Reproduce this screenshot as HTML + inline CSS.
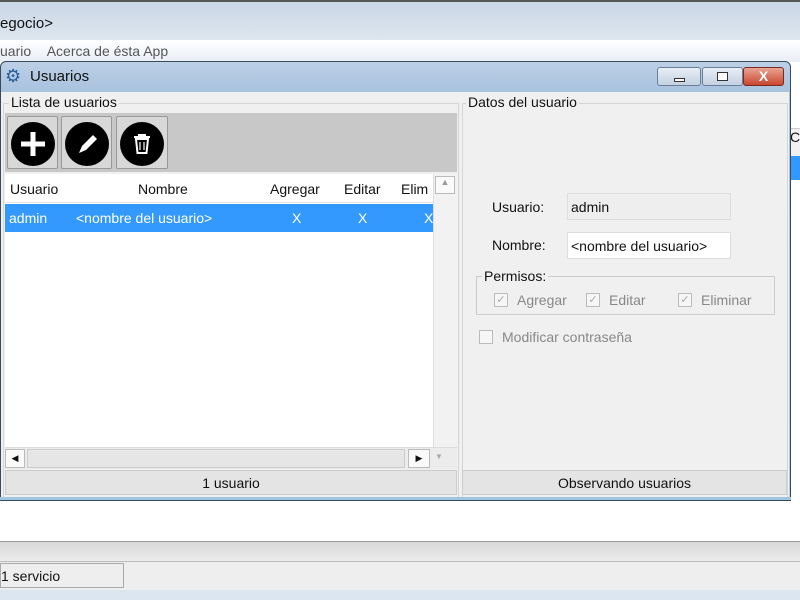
<!DOCTYPE html><html><head><style>
*{box-sizing:border-box}body{margin:0;width:800px;height:600px;overflow:hidden;background:#fff;font-family:"Liberation Sans",sans-serif;font-size:14px;color:#111;position:relative}
.a{position:absolute}
.cb{position:absolute;width:14px;height:14px;border:1px solid #bbb;background:#f6f6f6;font-size:11px;color:#aaa;text-align:center;line-height:12px}
.dis{color:#888}
</style></head><body>
<div class="a" style="left:0;top:0;width:800px;height:40px;background:linear-gradient(#c9d6e4,#dde6ef);border-top:2px solid #555"></div>
<div class="a" style="left:0;top:15px;font-size:15px">egocio&gt;</div>
<div class="a" style="left:0;top:40px;width:800px;height:22px;background:linear-gradient(#fff,#e9eef5)"></div>
<div class="a" style="left:0;top:43px;color:#555">uario&nbsp;&nbsp;&nbsp;&nbsp;Acerca de ésta App</div>
<div class="a" style="left:790px;top:128px;width:10px;height:28px;background:#f0f0f0;border-top:1px solid #ccc;font-size:14px">C</div>
<div class="a" style="left:790px;top:156px;width:10px;height:24px;background:#3399ff"></div>
<!-- dialog -->
<div class="a" style="left:0;top:61px;width:791px;height:440px;background:linear-gradient(#bcd0e6,#a9c2de 30px,#b5cbe3);border:1px solid #3a4a5a;border-radius:6px 6px 0 0"></div>
<div class="a" style="left:5px;top:66px;width:20px;height:20px;color:#2b5d9a;font-size:18px;line-height:20px">⚙</div>
<div class="a" style="left:30px;top:68px;font-size:15px">Usuarios</div>
<div class="a" style="left:657px;top:67px;width:44px;height:19px;border:1px solid #6b7f96;border-radius:3px;background:linear-gradient(#e8eef6,#c3d1e2)"><div class="a" style="left:16px;top:10px;width:11px;height:4px;border:1px solid #333;background:#fff"></div></div>
<div class="a" style="left:702px;top:67px;width:41px;height:19px;border:1px solid #6b7f96;border-radius:3px;background:linear-gradient(#e8eef6,#c3d1e2)"><div class="a" style="left:14px;top:4px;width:11px;height:9px;border:1px solid #333;background:#fff"></div></div>
<div class="a" style="left:743px;top:67px;width:41px;height:19px;border:1px solid #7a2a20;border-radius:3px;background:linear-gradient(#e9a593,#c9462f);color:#fff;font-weight:bold;text-align:center;line-height:17px;font-size:14px">X</div>
<div class="a" style="left:1px;top:92px;width:788px;height:405px;background:#f0f0f0"></div>
<!-- left group -->
<div class="a" style="left:3px;top:103px;width:456px;height:395px;border:1px solid #d5d5d5"></div>
<div class="a" style="left:9px;top:94px;background:#f0f0f0;padding:0 2px">Lista de usuarios</div>
<div class="a" style="left:5px;top:113px;width:452px;height:59px;background:#c8c8c8"></div>
<div class="a" style="left:7px;top:116px;width:51px;height:53px;border:1px solid #999;background:#d8d8d8;border-radius:2px"><svg width="49" height="51"><circle cx="25" cy="27" r="22" fill="#000"/><path d="M25 15v24M13 27h24" stroke="#fff" stroke-width="5"/></svg></div>
<div class="a" style="left:61px;top:116px;width:51px;height:53px;border:1px solid #999;background:#d8d8d8;border-radius:2px"><svg width="49" height="51"><circle cx="25" cy="27" r="22" fill="#000"/><path d="M17 36l3-7 11-11 4 4-11 11z" fill="#fff"/></svg></div>
<div class="a" style="left:116px;top:116px;width:52px;height:53px;border:1px solid #999;background:#d8d8d8;border-radius:2px"><svg width="50" height="51"><circle cx="25" cy="27" r="22" fill="#000"/><path d="M17 20h16M22 20v-2h6v2M19 22l1.5 14h9l1.5-14z" stroke="#fff" stroke-width="2" fill="none"/><path d="M23 25v8M27 25v8" stroke="#fff" stroke-width="1.2"/></svg></div>
<div class="a" style="left:5px;top:174px;width:428px;height:273px;background:#fff"></div>
<div class="a" style="left:5px;top:174px;width:428px;height:29px;background:#fff;border-bottom:1px solid #e5e5e5"></div>
<div class="a" style="left:10px;top:181px">Usuario</div>
<div class="a" style="left:138px;top:181px">Nombre</div>
<div class="a" style="left:270px;top:181px">Agregar</div>
<div class="a" style="left:344px;top:181px">Editar</div>
<div class="a" style="left:401px;top:181px">Elim</div>
<div class="a" style="left:5px;top:204px;width:428px;height:28px;background:#3399ff;color:#fff"></div>
<div class="a" style="left:9px;top:210px;color:#fff">admin</div>
<div class="a" style="left:76px;top:210px;color:#fff">&lt;nombre del usuario&gt;</div>
<div class="a" style="left:292px;top:210px;color:#fff">X</div>
<div class="a" style="left:358px;top:210px;color:#fff">X</div>
<div class="a" style="left:424px;top:210px;color:#fff">X</div>
<div class="a" style="left:433px;top:174px;width:24px;height:273px;background:#f2f2f2;border-left:1px solid #ddd"></div>
<div class="a" style="left:435px;top:176px;width:20px;height:18px;border:1px solid #bbb;background:#fafafa;font-size:9px;color:#999;text-align:center">▲</div>
<div class="a" style="left:5px;top:447px;width:452px;height:22px;background:#ececec;border-top:1px solid #ddd"></div>
<div class="a" style="left:5px;top:449px;width:20px;height:19px;border:1px solid #bbb;background:#fafafa;font-size:9px;text-align:center;line-height:17px">◀</div>
<div class="a" style="left:27px;top:449px;width:378px;height:19px;background:#e6e6e6;border:1px solid #ccc"></div>
<div class="a" style="left:408px;top:449px;width:22px;height:19px;border:1px solid #bbb;background:#fafafa;font-size:9px;text-align:center;line-height:17px">▶</div>
<div class="a" style="left:435px;top:452px;font-size:8px;color:#aaa">▼</div>
<div class="a" style="left:5px;top:470px;width:452px;height:25px;background:#e4e4e4;border:1px solid #ccc;text-align:center;line-height:24px">1 usuario</div>
<!-- right -->
<div class="a" style="left:462px;top:103px;width:326px;height:395px;border:1px solid #d5d5d5"></div>
<div class="a" style="left:466px;top:94px;background:#f0f0f0;padding:0 2px">Datos del usuario</div>
<div class="a" style="left:492px;top:199px">Usuario:</div>
<div class="a" style="left:567px;top:193px;width:164px;height:27px;background:#eee;border:1px solid #ddd;padding:5px 3px">admin</div>
<div class="a" style="left:492px;top:237px">Nombre:</div>
<div class="a" style="left:567px;top:232px;width:164px;height:27px;background:#fff;border:1px solid #ddd;padding:5px 3px;white-space:nowrap">&lt;nombre del usuario&gt;</div>
<div class="a" style="left:476px;top:276px;width:299px;height:39px;border:1px solid #ccc"></div>
<div class="a" style="left:482px;top:268px;background:#f0f0f0;padding:0 2px">Permisos:</div>
<div class="cb" style="left:494px;top:293px">✓</div><div class="a dis" style="left:517px;top:292px">Agregar</div>
<div class="cb" style="left:586px;top:293px">✓</div><div class="a dis" style="left:609px;top:292px">Editar</div>
<div class="cb" style="left:678px;top:293px">✓</div><div class="a dis" style="left:701px;top:292px">Eliminar</div>
<div class="cb" style="left:479px;top:330px"></div><div class="a dis" style="left:502px;top:329px">Modificar contraseña</div>
<div class="a" style="left:462px;top:470px;width:325px;height:25px;background:#e4e4e4;border:1px solid #ccc;text-align:center;line-height:24px">Observando usuarios</div>
<div class="a" style="left:0;top:497px;width:791px;height:4px;background:#9ec7df;border-bottom:1px solid #3a4a5a"></div>
<!-- bottom -->
<div class="a" style="left:0;top:541px;width:800px;height:20px;background:linear-gradient(#d8d8d8,#ececec);border-top:1px solid #999"></div>
<div class="a" style="left:0;top:561px;width:800px;height:29px;background:#eeeeee;border-top:1px solid #bbb"></div>
<div class="a" style="left:0;top:563px;width:124px;height:25px;border:1px solid #aaa;padding:4px 0 0 0">1 servicio</div>
<div class="a" style="left:0;top:590px;width:800px;height:10px;background:#dbe6f1"></div>
</body></html>
